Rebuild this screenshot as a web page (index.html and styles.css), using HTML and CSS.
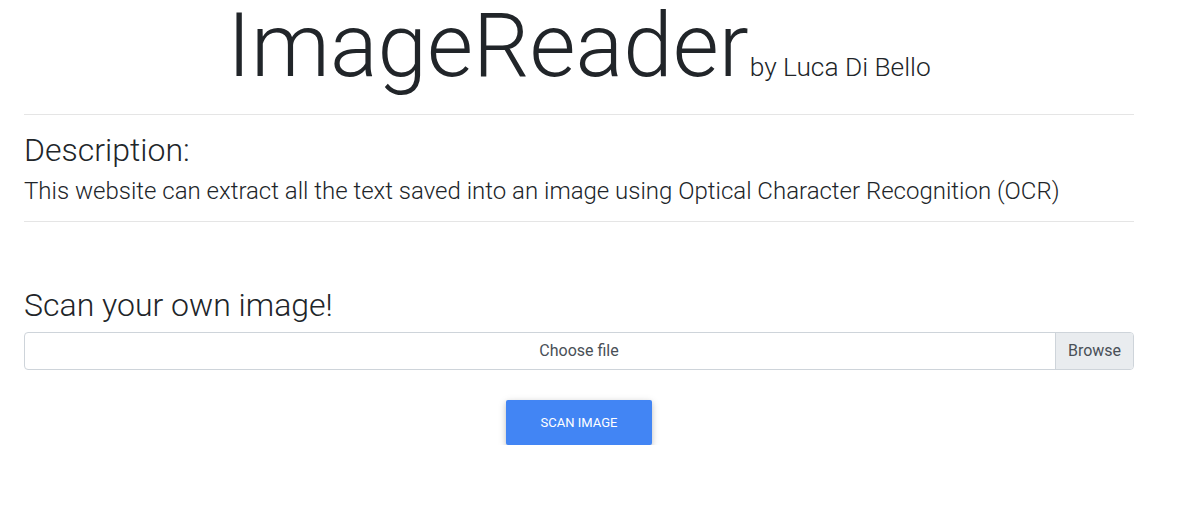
FILE: index.html
```html
<!DOCTYPE html>
<html>
<head>
<meta charset="utf-8">
<link rel="stylesheet" href="styles.css">
</head>
<body>
<div class="container">
  <header class="title-row">
    <h1 class="title">ImageReader</h1><span class="author">by Luca Di Bello</span>
  </header>
  <hr class="rule">
  <section class="desc">
    <h2 class="heading">Description:</h2>
    <p class="lead">This website can extract all the text saved into an image using Optical Character Recognition (OCR)</p>
  </section>
  <hr class="rule rule-after">
  <section class="scan">
    <h2 class="heading scan-heading">Scan your own image!</h2>
    <div class="file-input">
      <span class="file-label">Choose file</span>
      <span class="file-browse">Browse</span>
    </div>
    <div class="btn-row">
      <button class="btn-primary">SCAN IMAGE</button>
    </div>
  </section>
</div>
</body>
</html>
```

FILE: styles.css
```css
* { box-sizing: border-box; }
html, body { margin: 0; padding: 0; background: #fff; }
body {
  font-family: Roboto, "Noto Sans", sans-serif;
  color: #212529;
  font-size: 16px;
  line-height: 1.5;
}
.container {
  width: 1110px;
  margin-left: 24px;
}
.title-row {
  display: flex;
  justify-content: center;
  align-items: baseline;
  height: 98px;
  padding-top: 1px;
}
.title {
  margin: 0;
  font-size: 89px;
  font-weight: 300;
  line-height: 1;
}
.author {
  font-size: 26.3px;
  font-weight: 300;
  margin-left: 1px;
}
.rule {
  border: 0;
  border-top: 1px solid rgba(0,0,0,0.1);
  margin: 16px 0;
}
.rule-after { margin-top: 12px; }
.heading {
  margin: 0;
  font-size: 32px;
  font-weight: 300;
  line-height: 1.2;
}
.lead {
  margin: 4px 0 0;
  font-size: 24px;
  font-weight: 300;
  line-height: 1.5;
}
.scan { padding-top: 48px; }
.scan-heading { margin-bottom: 7px; }
.file-input {
  position: relative;
  height: 38px;
  border: 1px solid #ced4da;
  border-radius: 4px;
  overflow: hidden;
}
.file-label {
  display: block;
  text-align: center;
  line-height: 36px;
  color: #495057;
}
.file-browse {
  position: absolute;
  top: 0;
  right: 0;
  bottom: 0;
  width: 78px;
  background: #e9ecef;
  border-left: 1px solid #ced4da;
  text-align: center;
  line-height: 36px;
  color: #495057;
}
.btn-row {
  display: flex;
  justify-content: center;
  padding-top: 30px;
}
.btn-primary {
  background: #4285f4;
  color: #fff;
  border: 0;
  border-radius: 2px;
  width: 146px;
  height: 45px;
  font-family: Roboto, sans-serif;
  font-size: 13px;
  font-weight: 400;
  box-shadow: 0 2px 5px 0 rgba(0,0,0,.16), 0 2px 10px 0 rgba(0,0,0,.12);
}
```
